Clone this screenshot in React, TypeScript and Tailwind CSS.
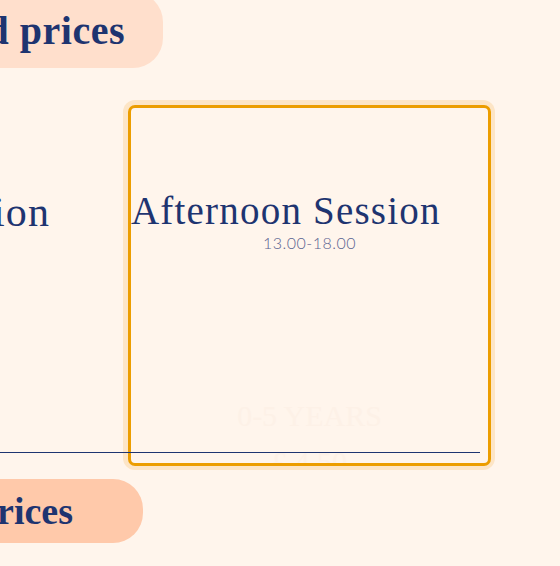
import React from "react";

const serif = { fontFamily: '"Liberation Serif", "Times New Roman", serif' };
const sans = { fontFamily: 'Lato, "Noto Sans", sans-serif' };

export default function App() {
  return (
    <main className="w-[560px] h-[566px] overflow-hidden bg-[#fff5ec] relative">
      {/* pill de arriba */}
      <div className="-mt-[8px] -ml-[237px] w-[400px] h-[76px] bg-[#ffdfcc] rounded-r-[30px] flex items-end justify-end pr-[38px] pb-[17px]">
        <h2 className="text-[40px] leading-none font-bold text-[#1e3470] whitespace-nowrap tracking-[0.5px]" style={serif}>
          Standard prices
        </h2>
      </div>

      {/* fila de tarjetas */}
      <div className="relative mt-[32px] flex items-start">
        <div className="w-[50px] shrink-0 flex justify-end pt-[91px]">
          <p className="text-[42px] leading-none text-[#1e3470] whitespace-nowrap tracking-[1.1px]" style={serif}>
            Morning Session
          </p>
        </div>

        <div className="ml-[73px] p-[5px] pr-[4px] pb-[4px] rounded-[12px] bg-[#fde5c6]">
          <div className="w-[363px] h-[361px] border-[3px] border-[#ec9d00] rounded-[7px] bg-[#fff5ec] flex flex-col pt-[83px] overflow-hidden">
            <h3 className="text-[39px] leading-none text-[#1e3470] whitespace-nowrap tracking-[1.2px]" style={serif}>
              Afternoon Session
            </h3>
            <p className="mt-[5px] text-center text-[16px] leading-none font-light tracking-[0.5px] text-[#5b6491]" style={sans}>
              13.00-18.00
            </p>
            <p className="mt-[150px] text-center text-[30px] leading-none text-[#fdf1e7]" style={serif}>
              0-5 YEARS
            </p>
            <p className="mt-[16px] text-center text-[30px] leading-none text-[#fdf1e7]" style={serif}>
              £ 4.50
            </p>
          </div>
        </div>

        <div className="absolute left-0 top-[352px] w-[480px] h-px bg-[#1e3470]" />
      </div>

      {/* pill de abajo */}
      <div className="mt-[9px] -ml-[257px] w-[400px] h-[64px] bg-[#ffc9aa] rounded-r-[30px] flex items-end justify-end pr-[70px] pb-[13px]">
        <h2 className="text-[38px] leading-none font-bold text-[#1e3470] whitespace-nowrap" style={serif}>
          Holiday prices
        </h2>
      </div>
    </main>
  );
}
